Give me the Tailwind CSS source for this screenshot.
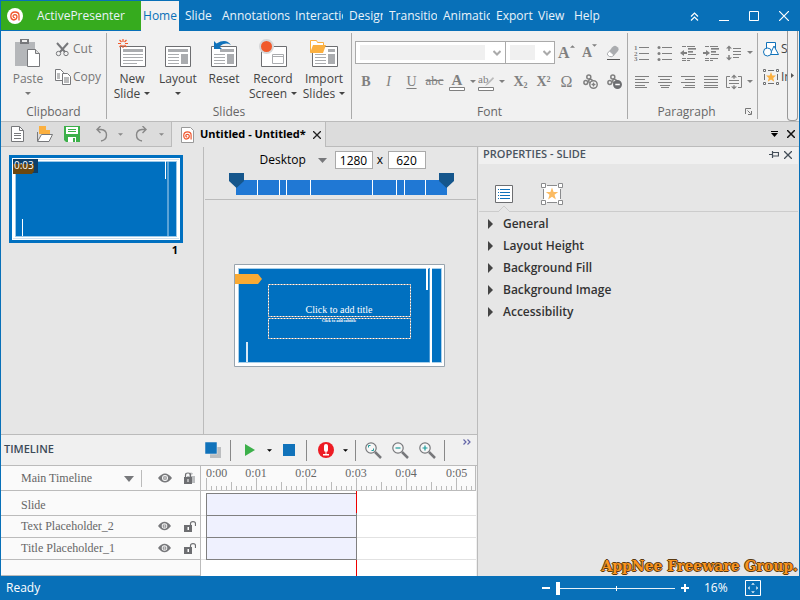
<!doctype html>
<html lang="en">
    <head>
        <meta charset="UTF-8" />
        <meta name="viewport" content="width=device-width, initial-scale=1" />
        <title>ActivePresenter</title>
        <script src="https://cdn.jsdelivr.net/npm/@tailwindcss/browser@4"></script>
    </head>
    <body
        class="flex h-screen flex-col overflow-hidden border-x border-[#0870b8] bg-[#e6e6e6] font-['Open_Sans','Noto_Sans',sans-serif] text-xs text-[#444]"
    >
        <!-- Shared symbols -->
        <svg class="hidden">
            <symbol id="caret" viewBox="0 0 6 3"><path d="M0 0h6L3 3z" fill="currentColor" /></symbol>
            <symbol id="eye" viewBox="0 0 14 10">
                <path d="M0 5Q7-4 14 5Q7 14 0 5z" fill="#77787b" />
                <circle cx="7" cy="5" r="3" fill="#fafafa" />
                <circle cx="7" cy="5" r="2" fill="#77787b" />
                <path d="M7 3v4M5 5h4" stroke="#ddd" stroke-width=".8" />
            </symbol>
            <symbol id="unlock" viewBox="0 0 12 11">
                <path d="M0 4h8v7H0z" fill="#6d6e71" />
                <path d="M3.500 6h1.500v3h-1.500z" fill="#fff" />
                <path d="M6.500 4V2.500Q6.500.7 9 .7T11.500 2.500V5" fill="none" stroke="#6d6e71" stroke-width="1.200" />
            </symbol>
            <symbol id="lens" viewBox="0 0 17 17">
                <path d="M10 10l6 6" stroke="#77787b" stroke-width="2.500" />
                <circle cx="6" cy="6" r="5.200" fill="#f7f7f7" stroke="#77787b" stroke-width="1.200" />
            </symbol>
            <symbol id="logo" viewBox="0 0 10 10">
                <path
                    d="M3.500 9Q.8 8.500.8 5Q1 1 5 1Q9 1 9 4.500V9.500M3.500 9Q6.800 8.500 7 6Q7 3.600 5 3.600Q3 3.700 3.100 5.500Q3.300 6.800 4.800 6.600"
                    fill="none"
                    stroke="#f0552c"
                    stroke-width="1.300"
                />
            </symbol>
        </svg>

        <!-- Title bar -->
        <header class="flex h-[31px] shrink-0 bg-[#0870b8] pt-px text-[#eaf3fa]">
            <div class="mb-px flex w-[140px] shrink-0 items-center bg-[#36ab1e] pl-[6px]">
                <svg class="size-4" viewBox="0 0 16 16">
                    <circle cx="8" cy="8" r="8" fill="#fff" />
                    <use href="#logo" x="3" y="3" width="10" height="10" />
                </svg>
                <span class="ml-[14px]">ActivePresenter</span>
            </div>
            <nav class="flex min-w-0 flex-1 items-stretch gap-[6px] text-left whitespace-nowrap">
                <button class="w-[38px] bg-[#f1f1f1] text-center text-[#0870b8]">Home</button>
                <button class="w-[31px] overflow-hidden text-left">Slide</button>
                <button class="w-[67px] text-left">Annotations</button>
                <button class="w-12 overflow-hidden text-left">Interactions</button>
                <button class="w-[34px] overflow-hidden text-left">Design</button>
                <button class="w-12 overflow-hidden text-left">Transitions</button>
                <button class="w-[47px] overflow-hidden text-left">Animations</button>
                <button class="w-9 text-left">Export</button>
                <button class="w-[30px] text-left">View</button>
                <button class="text-left">Help</button>
            </nav>
            <div class="flex shrink-0 items-center">
                <button class="flex w-[30px] justify-center" aria-label="Collapse ribbon">
                    <svg class="size-[9px]" viewBox="0 0 9 9" fill="none" stroke="#fff" stroke-width="1.200"><path d="M1 4.500l3.500-3.500L8 4.500M1 8.500l3.500-3.500L8 8.500" /></svg>
                </button>
                <button class="flex w-[30px] justify-center" aria-label="Minimize">
                    <svg class="size-[10px]" viewBox="0 0 10 10"><path d="M0 9h10v1H0z" fill="#fff" /></svg>
                </button>
                <button class="flex w-[30px] justify-center" aria-label="Maximize">
                    <svg class="size-[10px]" viewBox="0 0 10 10"><path d="M.5.5h9v9h-9z" fill="none" stroke="#fff" /></svg>
                </button>
                <button class="flex w-[30px] justify-center" aria-label="Close">
                    <svg class="size-[10px]" viewBox="0 0 10 10"><path d="M0 0l10 10M10 0L0 10" stroke="#fff" stroke-width="1.200" /></svg>
                </button>
            </div>
        </header>

        <!-- Ribbon -->
        <div class="flex h-[91px] shrink-0 border-b border-[#bbb] bg-[#f1f1f1]">
            <section class="my-[2px] flex w-[106px] shrink-0 flex-col border-r border-[#aaa]">
                <div class="flex flex-1 text-[#777]">
                    <button class="flex w-[54px] flex-col items-center pt-[6px] leading-[15px]">
                        <svg class="h-7 w-[26px]" viewBox="0 0 26 28">
                            <path d="M0 3h20v24H0z" fill="#b5b7ba" />
                            <path d="M5 0h9v5H5z" fill="#77787b" />
                            <path d="M7 1h5v2H7z" fill="#f1f1f1" />
                            <path d="M12.500 10.500h8l4 4v13h-12z" fill="#fff" stroke="#77787b" />
                            <path d="M20.500 10.500v4h4" fill="#ddd" stroke="#77787b" />
                        </svg>
                        <span class="mt-1">Paste</span>
                        <svg class="mt-[6px] h-[3px] w-[6px]"><use href="#caret" /></svg>
                    </button>
                    <div class="flex flex-col pt-[6px]">
                        <button class="flex h-[27px] items-center gap-[3px] pb-[8px]">
                            <svg class="h-4 w-[15px]" viewBox="0 0 15 16" fill="none" stroke="#77787b">
                                <path d="M2 2l8 9M13 2l-8 9" stroke-width="2" />
                                <circle cx="3.500" cy="12.500" r="2.200" />
                                <circle cx="11" cy="12.500" r="2.200" />
                            </svg>
                            Cut
                        </button>
                        <button class="flex h-[22px] items-center gap-[2px]">
                            <svg class="size-4" viewBox="0 0 16 16" fill="#fff" stroke="#77787b">
                                <path d="M.5.5h5l3 3v8h-8z" />
                                <path d="M7.500 4.500h5l3 3v8h-8z" />
                                <path d="M2 5h3M2 7h3M2 9h3M9 9h5M9 11h5M9 13h5" />
                            </svg>
                            Copy
                        </button>
                    </div>
                </div>
                <div class="h-[15px] text-center leading-[15px] text-[#666]">Clipboard</div>
            </section>

            <section class="my-[2px] flex w-[245px] shrink-0 flex-col border-r border-[#aaa]">
                <div class="flex flex-1 pl-[2px] leading-[15px]">
                    <button class="flex w-[46px] flex-col items-center pt-[6px]">
                        <svg class="h-7 w-[28px]" viewBox="0 0 28 28">
                            <path d="M2.500 7.500h25v20h-25z" fill="#fff" stroke="#6d6e71" />
                            <path d="M5 10h20v3H5z" fill="#aaacaf" />
                            <path d="M5 15.500h20M5 18.500h20M5 21.500h20M5 24.500h14" stroke="#aaacaf" />
                            <path d="M5 0v3M5 6v3M0 4.500h3M7 4.500h3M1.500 1l2 2M8.500 1l-2 2M1.500 8l2-2M8.500 8l-2-2" stroke="#f15a2b" stroke-width="1.200" />
                        </svg>
                        <span class="mt-1">New</span>
                        <span class="flex items-center gap-1">Slide <svg class="h-[3px] w-[6px]"><use href="#caret" /></svg></span>
                    </button>
                    <button class="flex w-[46px] flex-col items-center pt-[6px]">
                        <svg class="h-7 w-[26px]" viewBox="0 0 26 28">
                            <path d="M.5 7.500h25v20H.5z" fill="#fff" stroke="#6d6e71" />
                            <path d="M3 10h20v3H3zM16 15h7v10h-7z" fill="#aaacaf" />
                            <path d="M3 15.500h11M3 18.500h11M3 21.500h11M3 24.500h11" stroke="#aaacaf" />
                        </svg>
                        <span class="mt-1">Layout</span>
                        <svg class="mt-[6px] h-[3px] w-[6px]"><use href="#caret" /></svg>
                    </button>
                    <button class="flex w-[46px] flex-col items-center pt-[6px]">
                        <svg class="h-7 w-[26px]" viewBox="0 0 26 28">
                            <path d="M.5 7.500h25v20H.5z" fill="#fff" stroke="#6d6e71" />
                            <path d="M9 10h14v3H9zM16 15h7v10h-7z" fill="#aaacaf" />
                            <path d="M3 15.500h11M3 18.500h11M3 21.500h11M3 24.500h11" stroke="#aaacaf" />
                            <path d="M3 2v8h8L8.500 7.500Q14 2.500 20 6Q15-1 5.500 4.500z" fill="#1072ba" />
                        </svg>
                        <span class="mt-1">Reset</span>
                    </button>
                    <button class="flex w-[52px] flex-col items-center pt-[6px]">
                        <svg class="h-7 w-[28px]" viewBox="0 0 28 28">
                            <path d="M2.500 7.500h25v20h-25z" fill="#fff" stroke="#6d6e71" />
                            <path d="M13.500 15.500h11v9h-11zM13.500 17.500h11" fill="#fff" stroke="#aaacaf" />
                            <circle cx="7.500" cy="7.500" r="6.500" fill="#f15a2b" stroke="#d6d7d8" stroke-width="2" />
                        </svg>
                        <span class="mt-1">Record</span>
                        <span class="flex items-center gap-1">Screen <svg class="h-[3px] w-[6px]"><use href="#caret" /></svg></span>
                    </button>
                    <button class="flex w-[50px] flex-col items-center pt-[6px]">
                        <svg class="h-7 w-[28px]" viewBox="0 0 28 28">
                            <path d="M2.500 7.500h25v20h-25z" fill="#fff" stroke="#6d6e71" />
                            <path d="M18 10h7v3h-7zM18 15h7v10h-7z" fill="#aaacaf" />
                            <path d="M5 15.500h11M5 18.500h11M5 21.500h11M5 24.500h11" stroke="#aaacaf" />
                            <path d="M.5 13V1.500h6l1 2h6v3" fill="#fff" stroke="#fbb040" />
                            <path d="M3 6h13l-3 8H0z" fill="#fbb040" />
                        </svg>
                        <span class="mt-1">Import</span>
                        <span class="flex items-center gap-1">Slides <svg class="h-[3px] w-[6px]"><use href="#caret" /></svg></span>
                    </button>
                </div>
                <div class="h-[15px] text-center leading-[15px] text-[#666]">Slides</div>
            </section>

            <section class="my-[2px] flex w-[276px] shrink-0 flex-col border-r border-[#aaa]">
                <div class="flex-1 pt-2 pl-[3px] font-['Liberation_Serif',serif] text-[#808080]">
                    <div class="flex h-[23px] items-center">
                        <div class="flex h-[23px] w-[151px] items-center border border-[#aaa] bg-white">
                            <select aria-label="Font family" disabled class="ml-1 h-[15px] w-[125px] appearance-none bg-[#f0f0f0]"></select>
                            <svg class="ml-2 h-[6px] w-[8px]" viewBox="0 0 8 6" fill="none" stroke="#aaa" stroke-width="2"><path d="M.5 1L4 4.500 7.500 1" /></svg>
                        </div>
                        <div class="-ml-px flex h-[23px] w-[50px] items-center border border-[#aaa] bg-white">
                            <select aria-label="Font size" disabled class="ml-1 h-[15px] w-[25px] appearance-none bg-[#f0f0f0]"></select>
                            <svg class="ml-2 h-[6px] w-[8px]" viewBox="0 0 8 6" fill="none" stroke="#aaa" stroke-width="2"><path d="M.5 1L4 4.500 7.500 1" /></svg>
                        </div>
                        <button class="flex w-6 pl-[3px] text-base font-bold" aria-label="Grow font">
                            A<svg class="mt-1 h-[3px] w-[5px] rotate-180"><use href="#caret" /></svg>
                        </button>
                        <button class="flex w-[22px] pl-[3px] text-sm font-bold" aria-label="Shrink font">
                            A<svg class="mt-px h-[3px] w-[5px]"><use href="#caret" /></svg>
                        </button>
                        <button class="flex w-6 justify-center" aria-label="Clear formatting">
                            <svg class="h-4 w-[14px]" viewBox="0 0 14 16">
                                <path d="M6 2.500Q8 0 10 1l2 1.500Q13.500 4 12 6L8 10.500 3 6.500z" fill="#aaacaf" />
                                <path d="M3.500 6L8 10.200Q6 12.500 3.500 11.500L1.500 10Q.5 8.500 3.500 6z" fill="#fff" stroke="#aaacaf" />
                                <path d="M1 14.500h13" stroke="#555" />
                            </svg>
                        </button>
                    </div>
                    <div class="mt-[6px] flex h-[23px] items-center text-sm">
                        <button class="w-[22px] font-bold">B</button>
                        <button class="w-[23px] italic">I</button>
                        <button class="w-[23px] underline underline-offset-2">U</button>
                        <button class="w-[23px] text-[13px] line-through">abc</button>
                        <button class="flex w-[32px] items-center pl-[3px]" aria-label="Font colour">
                            <svg class="h-[18px] w-4" viewBox="0 0 16 18">
                                <text x="8" y="12" text-anchor="middle" font-size="15" font-weight="bold" fill="#808080">A</text>
                                <path d="M.5 14.500h15v3H.5z" fill="#fff" stroke="#808080" />
                            </svg>
                            <svg class="ml-[5px] h-[3px] w-[6px]"><use href="#caret" /></svg>
                        </button>
                        <button class="flex w-[31px] items-center" aria-label="Highlight colour">
                            <svg class="h-[18px] w-[17px]" viewBox="0 0 17 18">
                                <text x="0" y="10" font-size="11" fill="#808080">ab</text>
                                <path d="M15 4l-6 6-2 3 3-1.500 6-6z" fill="#bbb" />
                                <path d="M.5 14.500h15v3H.5z" fill="#fff" stroke="#808080" />
                            </svg>
                            <svg class="ml-1 h-[3px] w-[6px]"><use href="#caret" /></svg>
                        </button>
                        <button class="w-[23px] font-bold">X<sub class="text-[8px]">2</sub></button>
                        <button class="w-[23px] font-bold">X<sup class="text-[8px]">2</sup></button>
                        <button class="w-[23px] text-base">Ω</button>
                        <button class="flex w-6 justify-center" aria-label="Insert link">
                            <svg class="size-[15px]" viewBox="0 0 15 15" fill="none" stroke="#808080" stroke-width="1.500">
                                <circle cx="2.800" cy="8.500" r="1.900" /><circle cx="7.500" cy="7" r="1.800" /><circle cx="5.800" cy="3" r="2" />
                                <circle cx="10.500" cy="10.500" r="3.700" fill="#fff" /><path d="M10.500 8.500v4M8.500 10.500h4" />
                            </svg>
                        </button>
                        <button class="flex w-6 justify-center" aria-label="Remove link">
                            <svg class="size-[15px]" viewBox="0 0 15 15" fill="none" stroke="#808080" stroke-width="1.500">
                                <circle cx="2.800" cy="8.500" r="1.900" /><circle cx="7.500" cy="7" r="1.800" /><circle cx="5.800" cy="3" r="2" />
                                <circle cx="10.500" cy="10.500" r="3.700" fill="#6d6e71" stroke="#6d6e71" /><path d="M8.300 10.500h4.500" stroke="#fff" />
                            </svg>
                        </button>
                    </div>
                </div>
                <div class="h-[15px] text-center leading-[15px] text-[#666]">Font</div>
            </section>

            <section class="my-[2px] flex w-[130px] shrink-0 flex-col border-r border-[#aaa] text-[#808080]">
                <div class="flex-1 pt-2 pl-[2px]">
                    <div class="flex h-[23px] items-center">
                        <button class="flex w-[23px] justify-center" aria-label="Numbering">
                            <svg class="size-4" viewBox="0 0 16 16" fill="#808080" stroke="#808080">
                                <g stroke="none" font-family="Liberation Serif" font-size="7" font-weight="bold"><text x="0" y="5">1</text><text x="0" y="11">2</text><text x="0" y="16">3</text></g>
                                <path d="M5 2.500h10M5 8.500h10M5 14.500h10" />
                            </svg>
                        </button>
                        <button class="flex w-[23px] justify-center" aria-label="Bullets">
                            <svg class="size-4" viewBox="0 0 16 16" fill="#808080" stroke="#808080">
                                <path d="M5 2.500h10M5 8.500h10M5 14.500h10" />
                                <g stroke="none"><circle cx="2" cy="2.500" r="1.500" /><circle cx="2" cy="8.500" r="1.500" /><circle cx="2" cy="14.500" r="1.500" /></g>
                            </svg>
                        </button>
                        <button class="flex w-[23px] justify-center" aria-label="Decrease indent">
                            <svg class="size-4" viewBox="0 0 16 16" fill="#808080" stroke="#808080">
                                <path d="M2 1.500h4M7 1.500h8M2 13.500h4M7 13.500h8M2 15.500h4M7 15.500h3" />
                                <path d="M8 3.500h8M8 6.500h5M8 9.500h8" /><path d="M8 4.500h8M8 7.500h5" stroke="#aaa" />
                                <path d="M3 8h4" stroke-width="2" /><path d="M0 8l4-3v6z" stroke="none" />
                            </svg>
                        </button>
                        <button class="flex w-[23px] justify-center" aria-label="Increase indent">
                            <svg class="size-4" viewBox="0 0 16 16" fill="#808080" stroke="#808080">
                                <path d="M2 1.500h4M7 1.500h8M2 13.500h4M7 13.500h8M2 15.500h4M7 15.500h3" />
                                <path d="M8 3.500h8M8 6.500h5M8 9.500h8" /><path d="M8 4.500h8M8 7.500h5" stroke="#aaa" />
                                <path d="M0 8h4" stroke-width="2" /><path d="M7 8L3 5v6z" stroke="none" />
                            </svg>
                        </button>
                        <button class="flex w-[34px] items-center pl-1" aria-label="Line spacing">
                            <svg class="size-4" viewBox="0 0 16 16" fill="#808080" stroke="#808080">
                                <path d="M7 3.500h8M7 6.500h8M7 9.500h8M7 12.500h6" />
                                <path d="M3 2v4M3 10v4" stroke-width="1.500" />
                                <path d="M0 3.500l3-3 3 3zM0 12.500l3 3 3-3z" stroke="none" />
                            </svg>
                            <svg class="ml-[5px] h-[3px] w-[6px]"><use href="#caret" /></svg>
                        </button>
                    </div>
                    <div class="mt-[6px] flex h-[23px] items-center">
                        <button class="flex w-[23px] justify-center" aria-label="Align left">
                            <svg class="h-3 w-[14px]" viewBox="0 0 14 12" stroke="#808080"><path d="M0 .5h14M0 3.500h10M0 6.500h14M0 9.500h10M0 11.500h12" /></svg>
                        </button>
                        <button class="flex w-[23px] justify-center" aria-label="Align center">
                            <svg class="h-3 w-[14px]" viewBox="0 0 14 12" stroke="#808080"><path d="M0 .5h14M2 3.500h10M0 6.500h14M2 9.500h10M3 11.500h8" /></svg>
                        </button>
                        <button class="flex w-[23px] justify-center" aria-label="Align right">
                            <svg class="h-3 w-[14px]" viewBox="0 0 14 12" stroke="#808080"><path d="M0 .5h14M4 3.500h10M0 6.500h14M4 9.500h10M2 11.500h12" /></svg>
                        </button>
                        <button class="flex w-[23px] justify-center" aria-label="Justify">
                            <svg class="h-3 w-[14px]" viewBox="0 0 14 12" stroke="#808080"><path d="M0 .5h14M0 3.500h14M0 6.500h14M0 9.500h14M0 11.500h14" /></svg>
                        </button>
                        <button class="flex w-[34px] items-center pl-1" aria-label="Vertical alignment">
                            <svg class="size-4" viewBox="0 0 16 16" fill="none" stroke="#808080">
                                <path d="M4 2.500H.5v11H4M12 2.500h3.500v11H12M3 6.500h10M3 9.500h10M8 3v2M8 11v2" />
                                <path d="M5 3.500L8 .5l3 3zM5 12.500l3 3 3-3z" fill="#808080" stroke="none" />
                            </svg>
                            <svg class="ml-[5px] h-[3px] w-[6px]"><use href="#caret" /></svg>
                        </button>
                    </div>
                </div>
                <div class="relative h-[15px] pr-3 text-center leading-[15px] text-[#666]">
                    Paragraph
                    <button class="absolute top-1 right-[5px]" aria-label="Paragraph settings">
                        <svg class="size-[7px]" viewBox="0 0 7 7" fill="none" stroke="#777"><path d="M.5 6V.5H6M2.500 2.500l3 3M6.500 3v3.500H3" /></svg>
                    </button>
                </div>
            </section>

            <!-- Next group is cut off by the scroll button -->
            <section class="min-w-0 flex-1 overflow-hidden pt-[7px] pl-[5px] whitespace-nowrap">
                <button class="flex h-[22px] items-center gap-[2px]">
                    <svg class="size-4 shrink-0" viewBox="0 0 16 16" fill="#fff" stroke="#1072ba">
                        <path d="M3.500 1.500h9v9h-9z" /><path d="M11 5l4.500 8.500H7z" /><circle cx="4.500" cy="11" r="4" />
                    </svg>
                    Shapes
                </button>
                <button class="mt-[6px] flex h-[22px] items-center gap-[2px]">
                    <svg class="size-4 shrink-0" viewBox="0 0 16 16" fill="#fff" stroke="#6d6e71">
                        <path d="M1.500 5v6M14.500 5v6M5 1.500h6M5 14.500h6M.5.5h2v2h-2zM13.500.5h2v2h-2zM.5 13.500h2v2h-2zM13.500 13.500h2v2h-2z" />
                        <path d="M8 3l1.300 3.600H13L10.200 9l1 3.700L8 10.400l-3.200 2.300 1-3.700L3 6.600h3.700z" fill="#fbb040" stroke="none" />
                    </svg>
                    Interactions
                </button>
            </section>
            <button class="mr-px flex w-[11px] shrink-0 items-center justify-center rounded-b-sm border-x border-b border-[#999]" aria-label="Scroll ribbon">
                <svg class="h-[5px] w-[3px]" viewBox="0 0 3 5"><path d="M0 0v5l3-2.500z" fill="#555" /></svg>
            </button>
        </div>

        <!-- Quick access toolbar and document tabs -->
        <div class="flex h-[25px] shrink-0 border-b border-[#bbb] bg-[#dcdcdc]">
            <div class="flex w-[171px] items-center border-r border-[#bbb] pl-[10px] text-[#888]">
                <button aria-label="New">
                    <svg class="block h-4 w-[13px]" viewBox="0 0 13 16"><path d="M.5.5h8l4 4v11H.5z" fill="#fff" stroke="#77787b" /><path d="M8.500.5v4h4M3 7.500h7M3 9.500h7M3 12.500h7" fill="none" stroke="#77787b" /></svg>
                </button>
                <button class="ml-[13px]" aria-label="Open">
                    <svg class="block h-4 w-4" viewBox="0 0 16 16"><path d="M2 0h7v4h4v4H2z" fill="#fbb040" /><path d="M.5 15V6M.5 15.500l4-7h11l-3.500 7z" fill="#fff" stroke="#77787b" /></svg>
                </button>
                <button class="ml-[11px]" aria-label="Save">
                    <svg class="block h-4 w-4" viewBox="0 0 16 16"><path d="M0 0h16v16H2l-2-2z" fill="#3cb04a" /><path d="M2 1h12v7H2zM4 11h8v5H4z" fill="#fff" /><path d="M4 3.500h8M4 5.500h8" stroke="#3cb04a" /><path d="M9 12h2v4H9z" fill="#3cb04a" /></svg>
                </button>
                <button class="ml-4" aria-label="Undo">
                    <svg class="block h-4 w-3" viewBox="0 0 12 16" fill="none" stroke="#888" stroke-width="1.400"><path d="M4.500 0L1 3.500 4.500 7M1 3.500h4Q10.500 4 10.500 9T5 15" /></svg>
                </button>
                <button class="ml-[10px]" aria-label="Undo list"><svg class="block h-[3px] w-[5px]"><use href="#caret" /></svg></button>
                <button class="ml-3" aria-label="Redo">
                    <svg class="block h-4 w-3" viewBox="0 0 12 16" fill="none" stroke="#888" stroke-width="1.400"><path d="M7.500 0L11 3.500 7.500 7M11 3.500H7Q1.500 4 1.500 9T7 15" /></svg>
                </button>
                <button class="ml-3" aria-label="Redo list"><svg class="block h-[3px] w-[5px]"><use href="#caret" /></svg></button>
            </div>
            <div class="-mb-px flex w-[154px] items-center border-r border-[#bbb] bg-[#e6e6e6] pl-[9px] whitespace-nowrap text-black">
                <svg class="mr-[6px] h-4 w-[13px] shrink-0" viewBox="0 0 13 16"><path d="M.5.5h9l3 3v12H.5z" fill="#fff" stroke="#999" /><use href="#logo" x="2" y="4" width="9" height="9" /></svg>
                <span class="w-[113px] text-[11px] font-bold">Untitled - Untitled*</span>
                <button aria-label="Close document"><svg class="block size-2" viewBox="0 0 8 8"><path d="M0 0l8 8M8 0L0 8" stroke="#222" stroke-width="1.300" /></svg></button>
            </div>
            <div class="ml-auto flex items-center gap-[9px] pr-1">
                <button aria-label="Document list"><svg class="block h-[6px] w-[7px]" viewBox="0 0 7 6"><path d="M0 0h7v1H0zM0 2h7L3.500 6z" fill="#000" /></svg></button>
                <button aria-label="Close all"><svg class="block size-2" viewBox="0 0 8 8"><path d="M0 0l8 8M8 0L0 8" stroke="#111" stroke-width="1.500" /></svg></button>
            </div>
        </div>

        <main class="flex min-h-0 flex-1">
            <div class="flex min-w-0 flex-1 flex-col border-r border-[#bbb]">
                <div class="flex min-h-0 flex-1">
                    <!-- Slide thumbnails -->
                    <aside class="w-[203px] shrink-0 border-r border-[#bbb] pt-2 pl-2">
                        <svg class="h-[88px] w-[174px]" viewBox="0 0 174 88">
                            <path d="M0 0h174v88H0z" fill="#0070c0" />
                            <path d="M3 3h168v82H3z" fill="#fff" />
                            <path d="M6.500 6.500h161v75h-161z" fill="#0070c0" stroke="#9cc8e8" />
                            <path d="M4 4.500h166M4 83.500h166" stroke="#cfe0ee" />
                            <path d="M156.500 6v18M13.500 64v17" stroke="#fff" />
                            <path d="M159 6v75" stroke="#b5d6ee" />
                            <path d="M4 4h25v14H4z" fill="#0d3e68" />
                            <path d="M4 9h21v7l-2 3H4z" fill="#6b470f" />
                            <text x="5" y="14" fill="#fff" font-size="10">0:03</text>
                        </svg>
                        <div class="w-[169px] text-right text-[11px] leading-[14px] font-bold text-black">1</div>
                    </aside>

                    <!-- Canvas -->
                    <section class="flex min-w-0 flex-1 flex-col px-px">
                        <div class="flex h-[53px] shrink-0 flex-col items-center border-b border-[#bbb] pt-1 pl-[2px] text-black">
                            <div class="flex items-center pl-[2px]">
                                <div class="relative w-[75px]">
                                    <select aria-label="Device" class="w-full appearance-none bg-transparent leading-[18px]">
                                        <option>Desktop</option>
                                    </select>
                                    <svg class="pointer-events-none absolute top-[7px] right-2 h-[5px] w-[9px]" viewBox="0 0 9 5"><path d="M0 0h9L4.500 5z" fill="#77787b" /></svg>
                                </div>
                                <input aria-label="Width" value="1280" class="h-[18px] w-[38px] border border-[#aaa] bg-white text-center" />
                                <span class="w-[15px] text-center">x</span>
                                <input aria-label="Height" value="620" class="h-[18px] w-[38px] border border-[#aaa] bg-white text-center" />
                            </div>
                            <svg class="mt-1 h-[23px] w-[226px] shrink-0" viewBox="0 0 226 23">
                                <path d="M7 7h211v15H7z" fill="#2078d4" />
                                <path d="M28.500 7v15M50.500 7v15M57.500 7v15M81.500 7v15M143.500 7v15M167.500 7v15M175.500 7v15M196.500 7v15" stroke="#fff" />
                                <path d="M0 0h15v8l-7.500 7L0 8zM210 0h15v8l-7.500 7-7.500-7z" fill="#15568c" />
                            </svg>
                        </div>
                        <div class="flex min-h-0 flex-1 items-center justify-center pr-[2px] pb-[3px]">
                            <svg class="h-[103px] w-[211px]" viewBox="0 0 211 103">
                                <path d="M.5.5h210v102H.5z" fill="#fff" stroke="#98a4ae" />
                                <path d="M4.500 4.500h203v94h-203z" fill="#0070c0" stroke="#a8cfea" />
                                <path d="M193 1v25M197 1v98" stroke="#fff" stroke-width="2" />
                                <path d="M195.500 4v94" stroke="#4a9ad4" />
                                <path d="M13 78v20" stroke="#d8e8f5" stroke-width="2" />
                                <path d="M1 10h23l4 5-4 5H1z" fill="#f9aa33" />
                                <path d="M34.500 20.500h142v32h-142zM34.500 54.500h142v20h-142z" fill="none" stroke="#6b5a52" />
                                <path d="M34.500 20.500h142v32h-142zM34.500 54.500h142v20h-142z" fill="none" stroke="#fff" stroke-dasharray="2 1" />
                                <text x="105" y="49" fill="#fff" text-anchor="middle" font-size="10" font-family="Liberation Serif, serif">Click to add title</text>
                                <text x="105" y="58" fill="#fff" text-anchor="middle" font-size="4" font-weight="bold" font-family="Liberation Serif, serif">Click to add subtitle</text>
                            </svg>
                        </div>
                    </section>
                </div>

                <!-- Timeline -->
                <section class="h-[142px] shrink-0 border-t border-[#bbb] bg-[#f0f0f0]">
                    <div class="flex h-[30px] items-center">
                        <h2 class="w-[200px] pb-[2px] pl-[3px] text-[11px] font-semibold text-[#3c4a58]">TIMELINE</h2>
                        <div class="flex flex-1 items-center text-black">
                            <button class="ml-1" aria-label="Bring forward"><svg class="block size-4" viewBox="0 0 16 16"><path d="M5 5h11v11H5z" fill="#bcbec0" /><path d="M0 0h12v12H0z" fill="#1072ba" stroke="#f0f0f0" stroke-width=".5" /></svg></button>
                            <span class="ml-[9px] h-[21px] w-px bg-[#888]"></span>
                            <button class="ml-[14px]" aria-label="Play"><svg class="block h-3 w-[10px]" viewBox="0 0 10 12"><path d="M0 0v12l10-6z" fill="#3cb04a" /></svg></button>
                            <button class="ml-3" aria-label="Play options"><svg class="block h-[3px] w-[5px]"><use href="#caret" /></svg></button>
                            <button class="ml-[11px]" aria-label="Stop"><svg class="block size-3"><path d="M0 0h12v12H0z" fill="#1072ba" /></svg></button>
                            <span class="ml-[11px] h-[21px] w-px bg-[#888]"></span>
                            <button class="ml-[11px]" aria-label="Record"><svg class="block size-4" viewBox="0 0 16 16"><circle cx="8" cy="8" r="8" fill="#ed1c24" /><rect x="6" y="2" width="4" height="8" rx="2" fill="#fff" /><path d="M7.500 10h1v2h2.500v1.500H5V12h2.500z" fill="#fff" /></svg></button>
                            <button class="ml-[9px]" aria-label="Record options"><svg class="block h-[3px] w-[5px]"><use href="#caret" /></svg></button>
                            <span class="ml-[7px] h-[21px] w-px bg-[#888]"></span>
                            <button class="ml-[9px]" aria-label="Zoom to fit"><svg class="block size-[17px]" viewBox="0 0 17 17"><use href="#lens" /><path d="M3.500 5.500v-2h2M8.500 6.500v2h-2" fill="none" stroke="#1a9a9a" /></svg></button>
                            <button class="ml-[10px]" aria-label="Zoom out"><svg class="block size-[17px]" viewBox="0 0 17 17"><use href="#lens" /><path d="M3.500 6h5" stroke="#1a9a9a" stroke-width="1.200" /></svg></button>
                            <button class="ml-[10px]" aria-label="Zoom in"><svg class="block size-[17px]" viewBox="0 0 17 17"><use href="#lens" /><path d="M3.500 6h5M6 3.500v5" stroke="#1a9a9a" stroke-width="1.200" /></svg></button>
                            <span class="ml-[8px] h-[21px] w-px bg-[#888]"></span>
                            <button class="mr-[6px] mb-4 ml-auto" aria-label="More"><svg class="block h-[6px] w-2" viewBox="0 0 8 6" fill="none" stroke="#6264a7" stroke-width="1.200"><path d="M.5.5L3 3 .5 5.500M4.500.5L7 3 4.500 5.500" /></svg></button>
                        </div>
                    </div>
                    <div class="flex h-[111px] border-t border-[#bbb] font-['Liberation_Serif',serif] text-[#666]">
                        <div class="flex w-[200px] shrink-0 flex-col border-r border-[#bbb] bg-[#fafafa]">
                            <div class="flex h-[25px] items-center border-b border-[#bbb] pl-5">
                                <div class="relative w-[121px] border-r border-[#bbb]">
                                    <select aria-label="Timeline" class="w-full appearance-none bg-transparent pb-px leading-4">
                                        <option>Main Timeline</option>
                                    </select>
                                    <svg class="pointer-events-none absolute top-[6px] right-[7px] h-[6px] w-[10px]" viewBox="0 0 10 6"><path d="M0 0h10L5 6z" fill="#77787b" /></svg>
                                </div>
                                <svg class="ml-4 h-[10px] w-[14px]"><use href="#eye" /></svg>
                                <svg class="ml-3 h-3 w-[11px]" viewBox="0 0 11 12"><path d="M3 4h8v7H3zM5 4V2q0-1.500 2-1.500T9 2" fill="#bcbec0" /><path d="M0 5h8v7H0z" fill="#6d6e71" /><path d="M3.500 7h1v3h-1z" fill="#fff" /><path d="M1.500 5V3Q1.500 1 4 1t2.500 2v2" fill="none" stroke="#6d6e71" stroke-width="1.200" /></svg>
                            </div>
                            <div class="flex h-[25px] items-center border-b border-[#bbb] pt-[3px] pl-5">Slide</div>
                            <div class="flex h-[22px] items-center border-b border-[#bbb] pb-px pl-5">
                                <span class="w-[137px]">Text Placeholder_2</span>
                                <svg class="h-[10px] w-[13px]"><use href="#eye" /></svg>
                                <svg class="ml-[13px] h-[11px] w-3"><use href="#unlock" /></svg>
                            </div>
                            <div class="flex h-[22px] items-center border-b border-[#bbb] pb-px pl-5">
                                <span class="w-[137px]">Title Placeholder_1</span>
                                <svg class="h-[10px] w-[13px]"><use href="#eye" /></svg>
                                <svg class="ml-[13px] h-[11px] w-3"><use href="#unlock" /></svg>
                            </div>
                            <div class="flex-1 border-b border-[#bbb]"></div>
                        </div>
                        <div class="relative mr-px flex min-w-0 flex-1 flex-col bg-white">
                            <div class="relative h-[25px] border-r border-b border-[#bbb] bg-[#fafafa]">
                                <svg class="absolute inset-0 h-6 w-full">
                                    <defs>
                                        <pattern id="ticks" x="5" width="50" height="24" patternUnits="userSpaceOnUse">
                                            <path d="M.5 12v12M5.500 20v4M10.500 20v4M15.500 20v4M20.500 20v4M25.500 16v8M30.500 20v4M35.500 20v4M40.500 20v4M45.500 20v4" stroke="#bbb" />
                                        </pattern>
                                    </defs>
                                    <rect x="5" width="100%" height="24" fill="url(#ticks)" />
                                </svg>
                                <div class="relative flex leading-[14px]">
                                    <span class="w-[30px] pl-[5px]">0:00</span>
                                    <span class="w-[50px] text-center">0:01</span>
                                    <span class="w-[50px] text-center">0:02</span>
                                    <span class="w-[50px] text-center">0:03</span>
                                    <span class="w-[50px] text-center">0:04</span>
                                    <span class="w-[43px] pl-[15px]">0:05</span>
                                </div>
                            </div>
                            <div class="flex h-[25px] border-b border-[#e2e2e2] pt-[2px] pl-[5px]">
                                <div class="h-[23px] w-[151px] border border-[#808080] bg-[#eff1fe]"></div>
                            </div>
                            <div class="flex h-[22px] border-b border-[#e2e2e2] pl-[5px]">
                                <div class="h-[22px] w-[151px] border-x border-b border-[#808080] bg-[#eff1fe]"></div>
                            </div>
                            <div class="flex h-[22px] border-b border-[#e2e2e2] pl-[5px]">
                                <div class="h-[22px] w-[151px] border-x border-b border-[#808080] bg-[#eff1fe]"></div>
                            </div>
                            <!-- Playhead -->
                            <div class="absolute top-[25px] left-[155px] h-[22px] w-px bg-[#e00]"></div>
                            <div class="absolute bottom-0 left-[155px] h-4 w-px bg-[#e00]"></div>
                        </div>
                    </div>
                </section>
            </div>

            <!-- Properties -->
            <aside class="relative ml-px flex w-[320px] shrink-0 flex-col pr-px">
                <div class="flex h-[17px] items-center bg-[#f0f0f0] pb-[2px] pl-1">
                    <h2 class="text-[11px] font-semibold text-[#4a5560]">PROPERTIES - SLIDE</h2>
                    <button class="ml-auto" aria-label="Pin"><svg class="block h-[7px] w-[10px]" viewBox="0 0 10 7" fill="none" stroke="#444e58"><path d="M0 3.500h3M3.500 0v7M3.500 1.500h6v4M3.500 5h6" stroke-width="1.200" /></svg></button>
                    <button class="mr-[6px] ml-[5px]" aria-label="Close panel"><svg class="block size-2" viewBox="0 0 8 8"><path d="M0 0l8 8M8 0L0 8" stroke="#444e58" stroke-width="1.300" /></svg></button>
                </div>
                <div class="flex h-[48px] shrink-0 items-center gap-7 border-b border-[#ccc] pt-3 pl-4">
                    <button aria-label="Slide properties"><svg class="block size-[18px]" viewBox="0 0 18 18"><path d="M.5.5h17v17H.5z" fill="#fff" stroke="#6d6e71" /><path d="M3 4.500h1M5 4.500h10M3 7.500h1M5 7.500h10M3 10.500h1M5 10.500h10M3 13.500h1M5 13.500h10" stroke="#1072ba" /></svg></button>
                    <button aria-label="Object states"><svg class="block size-[22px]" viewBox="0 0 22 22" fill="#fff" stroke="#8a8b8d"><path d="M2.500 2.500h17v17h-17z" stroke="none" /><path d="M2.500 6v10M19.500 6v10M6 2.500h10M6 19.500h10M.5.5h4v4h-4zM17.500.5h4v4h-4zM.5 17.500h4v4h-4zM17.500 17.500h4v4h-4z" /><path d="M11 4.500l1.600 4.400h4.600L13.500 11.800l1.400 4.700-3.900-2.800-3.900 2.800 1.400-4.700-3.700-2.900h4.600z" fill="#fbbb62" stroke="none" /></svg></button>
                </div>
                <svg class="absolute top-[58px] left-[19px] h-[7px] w-3" viewBox="0 0 12 7"><path d="M0 7l6-6 6 6" fill="#e6e6e6" stroke="#ccc" /></svg>
                <div class="flex flex-col pt-px pl-[9px] font-semibold text-[#333]">
                    <button class="flex h-[22px] items-center gap-[10px]"><svg class="h-[10px] w-[5px]"><path d="M0 0v10l5-5z" fill="#444" /></svg>General</button>
                    <button class="flex h-[22px] items-center gap-[10px]"><svg class="h-[10px] w-[5px]"><path d="M0 0v10l5-5z" fill="#444" /></svg>Layout Height</button>
                    <button class="flex h-[22px] items-center gap-[10px]"><svg class="h-[10px] w-[5px]"><path d="M0 0v10l5-5z" fill="#444" /></svg>Background Fill</button>
                    <button class="flex h-[22px] items-center gap-[10px]"><svg class="h-[10px] w-[5px]"><path d="M0 0v10l5-5z" fill="#444" /></svg>Background Image</button>
                    <button class="flex h-[22px] items-center gap-[10px]"><svg class="h-[10px] w-[5px]"><path d="M0 0v10l5-5z" fill="#444" /></svg>Accessibility</button>
                </div>
                <div class="mt-auto text-right font-['DejaVu_Serif',serif] text-[14px] leading-[20px] font-bold whitespace-nowrap text-[#f9941e] [text-shadow:1px_0_#5a3a10,-1px_0_#5a3a10,0_1px_#5a3a10,0_-1px_#5a3a10]">AppNee Freeware Group.</div>
            </aside>
        </main>

        <!-- Status bar -->
        <footer class="flex h-6 shrink-0 items-center bg-[#0870b8] text-white">
            <span class="pl-[5px]">Ready</span>
            <button class="ml-auto" aria-label="Zoom out"><svg class="block h-2 w-2"><path d="M0 3h8v2H0z" fill="#fff" /></svg></button>
            <div class="relative mx-[6px] flex w-[119px] items-center">
                <div class="absolute inset-x-0 top-1/2 h-px bg-white/90"></div>
                <div class="absolute top-1/2 left-1/2 -mt-[2px] h-[5px] w-px bg-white"></div>
                <input
                    type="range"
                    aria-label="Zoom"
                    value="0"
                    class="relative h-[14px] w-full appearance-none bg-transparent [&::-webkit-slider-thumb]:h-[13px] [&::-webkit-slider-thumb]:w-1 [&::-webkit-slider-thumb]:appearance-none [&::-webkit-slider-thumb]:bg-white"
                />
            </div>
            <button aria-label="Zoom in"><svg class="block size-2"><path d="M0 3h8v2H0zM3 0h2v8H3z" fill="#fff" /></svg></button>
            <span class="ml-[15px] w-[41px]">16%</span>
            <button class="mr-[38px]" aria-label="Fit to window"><svg class="block size-4" viewBox="0 0 16 16" fill="none" stroke="#fff"><path d="M.5.5h15v15H.5z" /><path d="M6.500 4.500L8 3l1.500 1.500zM6.500 11.500L8 13l1.500-1.500zM4.500 6.500L3 8l1.500 1.500zM11.500 6.500L13 8l-1.500 1.500z" fill="#fff" stroke-width=".3" /></svg></button>
        </footer>
    </body>
</html>
